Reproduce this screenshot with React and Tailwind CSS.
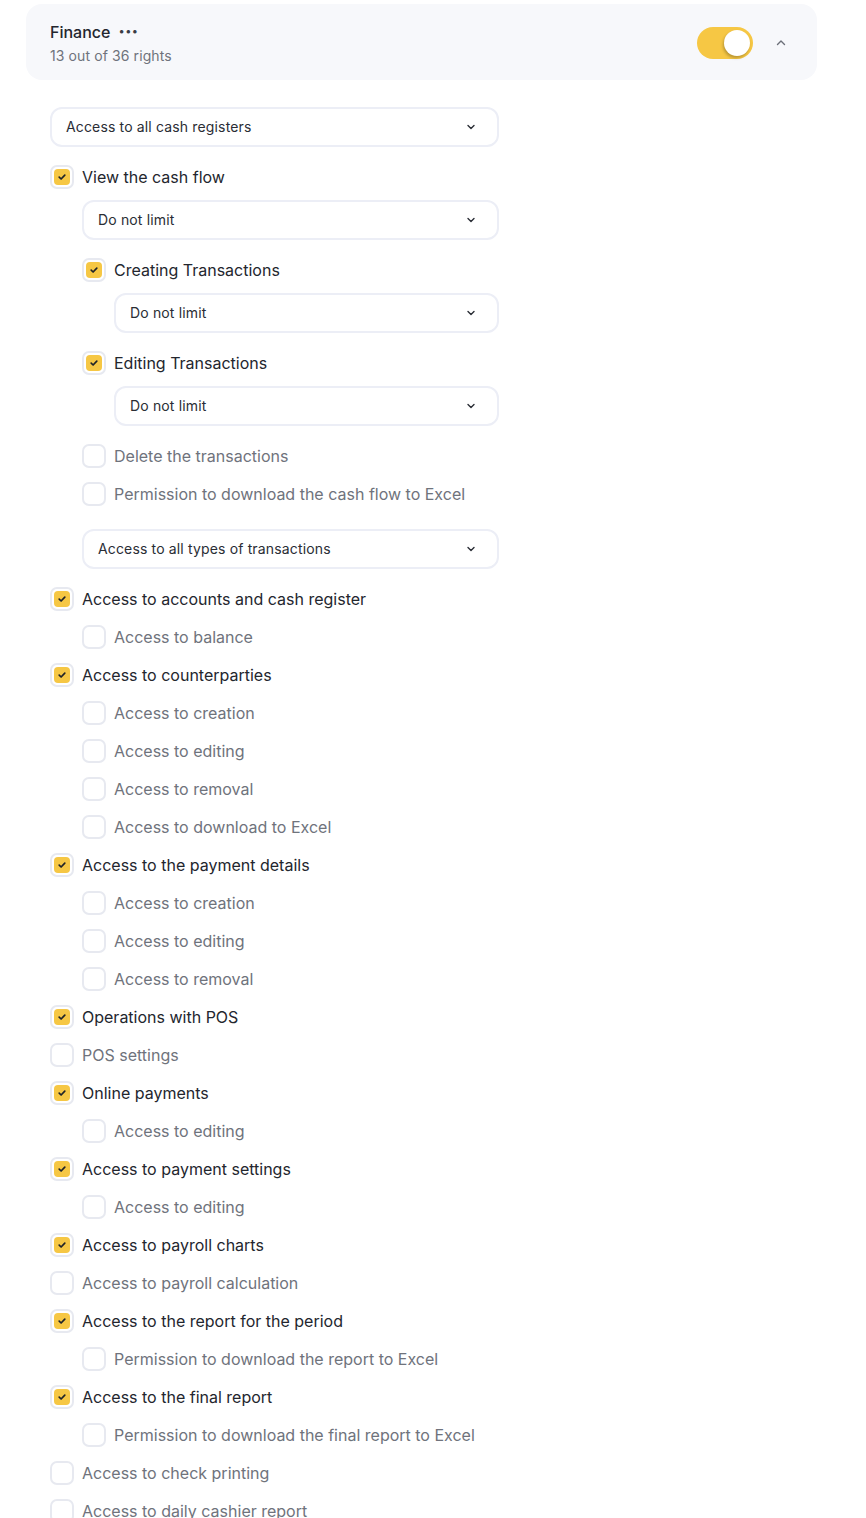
const TREE = [
    { type: 'select', label: 'Access to all cash registers', level: 0 },
    { label: 'View the cash flow', checked: true, level: 0 },
    { type: 'select', label: 'Do not limit', level: 1 },
    { label: 'Creating Transactions', checked: true, level: 1 },
    { type: 'select', label: 'Do not limit', level: 2 },
    { label: 'Editing Transactions', checked: true, level: 1 },
    { type: 'select', label: 'Do not limit', level: 2 },
    { label: 'Delete the transactions', level: 1 },
    { label: 'Permission to download the cash flow to Excel', level: 1 },
    { type: 'select', label: 'Access to all types of transactions', level: 1, spaced: true },
    { label: 'Access to accounts and cash register', checked: true, level: 0 },
    { label: 'Access to balance', level: 1 },
    { label: 'Access to counterparties', checked: true, level: 0 },
    { label: 'Access to creation', level: 1 },
    { label: 'Access to editing', level: 1 },
    { label: 'Access to removal', level: 1 },
    { label: 'Access to download to Excel', level: 1 },
    { label: 'Access to the payment details', checked: true, level: 0 },
    { label: 'Access to creation', level: 1 },
    { label: 'Access to editing', level: 1 },
    { label: 'Access to removal', level: 1 },
    { label: 'Operations with POS', checked: true, level: 0 },
    { label: 'POS settings', level: 0 },
    { label: 'Online payments', checked: true, level: 0 },
    { label: 'Access to editing', level: 1 },
    { label: 'Access to payment settings', checked: true, level: 0 },
    { label: 'Access to editing', level: 1 },
    { label: 'Access to payroll charts', checked: true, level: 0 },
    { label: 'Access to payroll calculation', level: 0 },
    { label: 'Access to the report for the period', checked: true, level: 0 },
    { label: 'Permission to download the report to Excel', level: 1 },
    { label: 'Access to the final report', checked: true, level: 0 },
    { label: 'Permission to download the final report to Excel', level: 1 },
    { label: 'Access to check printing', level: 0 },
    { label: 'Access to daily cashier report', level: 0 },
];

const INDENT = ['ml-0', 'ml-8', 'ml-16'];

function Checkbox({ checked }) {
    return (
        <span className="w-6 h-6 shrink-0 rounded-[7px] border-2 border-[#e7e9f0] bg-white flex items-center justify-center">
            {checked && (
                <span className="w-4 h-4 rounded-[4px] bg-[#f6c744] flex items-center justify-center">
                    <svg width="10" height="10" viewBox="0 0 10 10" fill="none">
                        <path
                            d="M2.2 5.2l1.9 1.8L7.8 3.2"
                            stroke="#1f2329"
                            strokeWidth="1.7"
                            strokeLinecap="round"
                            strokeLinejoin="round"
                        />
                    </svg>
                </span>
            )}
        </span>
    );
}

function Select({ label, level, spaced }) {
    return (
        <div
            className={`${INDENT[level]} ${spaced ? 'mt-4' : 'mt-1'} mb-[11px] h-10 rounded-xl border-2 border-[#eceef6] bg-white flex items-center justify-between pl-[14px] pr-5`}>
            <span className="text-sm tracking-[0.15px] text-[#2a2d35]">{label}</span>
            <svg width="12" height="12" viewBox="0 0 12 12" fill="none">
                <path
                    d="M3 4.5l3 3 3-3"
                    stroke="#2a2d35"
                    strokeWidth="1.4"
                    strokeLinecap="round"
                    strokeLinejoin="round"
                />
            </svg>
        </div>
    );
}

function Row({ label, checked, level }) {
    return (
        <label className={`${INDENT[level]} h-[38px] flex items-center gap-2`}>
            <Checkbox checked={checked} />
            <span className={`text-base ${checked ? 'text-[#23262e]' : 'text-[#6f737c]'}`}>
                {label}
            </span>
        </label>
    );
}

export default function App() {
    return (
        <div
            className="w-[866px] h-[1518px] overflow-hidden bg-white pt-1"
            style={{ fontFamily: 'Inter, "Noto Sans", sans-serif' }}>
            <div className="ml-[26px] w-[791px] rounded-2xl bg-[#f7f8fb] pl-6 pr-6 pt-4 pb-3.5 flex items-center justify-between">
                <div>
                    <div className="flex items-center gap-2 leading-6">
                        <span className="text-base font-medium text-[#23262e]">Finance</span>
                        <span className="text-[#3a3d45] text-[11px] tracking-[0.5px] -mt-0.5">•••</span>
                    </div>
                    <div className="mt-0.5 text-sm leading-5 tracking-[0.1px] text-[#6f737c]">13 out of 36 rights</div>
                </div>
                <div className="flex items-center gap-4">
                    <div className="w-14 h-8 rounded-full bg-[#f6c744] flex items-center justify-end pr-[3px]">
                        <span className="w-[26px] h-[26px] rounded-full bg-white shadow-[-1px_2px_3px_rgba(0,0,0,0.25)]" />
                    </div>
                    <div className="w-6 h-6 flex items-center justify-center">
                        <svg width="12" height="12" viewBox="0 0 12 12" fill="none">
                            <path
                                d="M2.5 7.5L6 4l3.5 3.5"
                                stroke="#6b6f78"
                                strokeWidth="1.4"
                                strokeLinecap="round"
                                strokeLinejoin="round"
                            />
                        </svg>
                    </div>
                </div>
            </div>

            <div className="ml-[50px] w-[449px] mt-[27px]">
                {TREE.map((item, i) =>
                    item.type === 'select' ? (
                        <Select key={i} {...item} />
                    ) : (
                        <Row key={i} {...item} />
                    )
                )}
            </div>
        </div>
    );
}
